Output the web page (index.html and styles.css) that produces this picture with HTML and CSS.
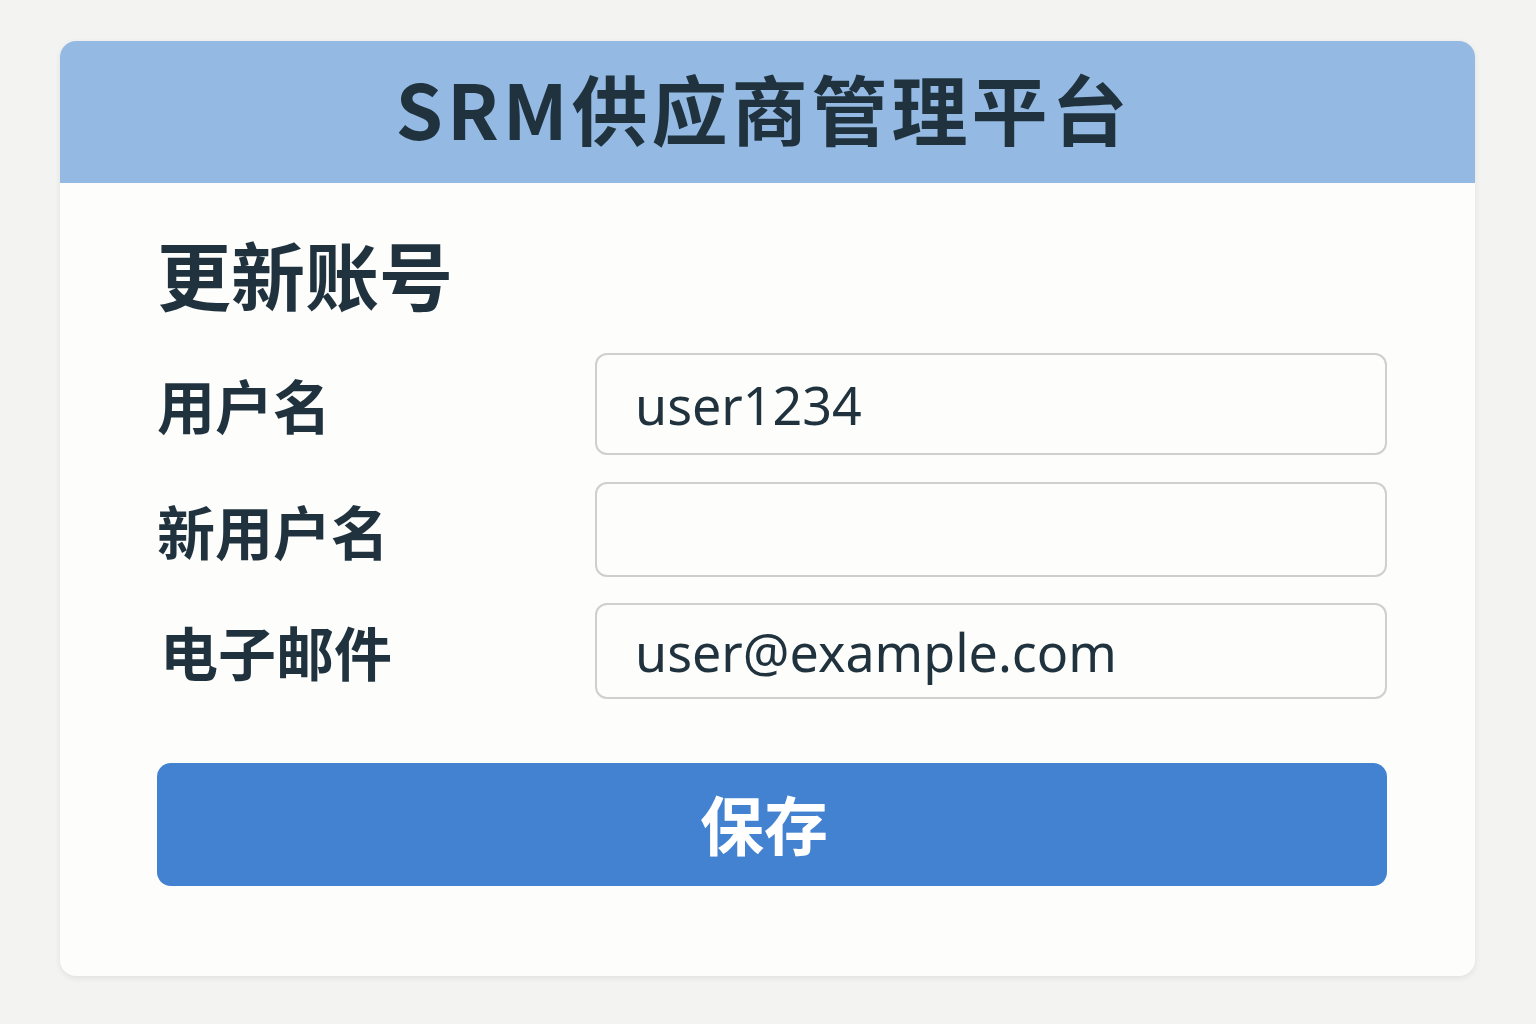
FILE: index.html
```html
<!DOCTYPE html>
<html lang="zh-CN">
<head>
    <meta charset="UTF-8">
    <meta name="viewport" content="width=device-width, initial-scale=1.0">
    <title>SRM供应商管理平台 - 更新账号</title>
    <link rel="stylesheet" href="styles.css">
</head>
<body>
    <div class="card">
        <div class="card-header">
            <h1>SRM供应商管理平台</h1>
        </div>

        <form class="card-body" onsubmit="return false;">
            <h2>更新账号</h2>

            <div class="form-row">
                <label for="username">用户名</label>
                <input type="text" id="username" value="user1234">
            </div>

            <div class="form-row row-new">
                <label for="new-username">新用户名</label>
                <input type="text" id="new-username" value="">
            </div>

            <div class="form-row row-email">
                <label for="email">电子邮件</label>
                <input type="email" id="email" value="user@example.com">
            </div>

            <button type="submit" class="save-btn">保存</button>
        </form>
    </div>
</body>
</html>
```

FILE: styles.css
```css
body {
    margin: 0;
    padding: 41px 61px 48px 60px;
    background-color: #f3f3f2;
    font-family: "Noto Sans CJK SC", "Noto Sans", sans-serif;
    color: #1f323d;
}

.card {
    background-color: #fdfdfc;
    border-radius: 16px;
    overflow: hidden;
    box-shadow: 0 2px 6px rgba(0,0,0,0.08);
}

.card-header {
    height: 142px;
    background-color: #94bae4;
    display: flex;
    align-items: center;
    justify-content: center;
}

.card-header h1 {
    margin: 0 0 10px 0;
    font-size: 76px;
    font-weight: 700;
    letter-spacing: 4px;
    line-height: 1;
    padding-right: 8px;
}

.card-body {
    padding: 50px 88px 90px 97px;
}

.card-body h2 {
    margin: 0 0 40px 0;
    font-size: 74px;
    font-weight: 700;
    line-height: 80px;
}

.form-row {
    display: grid;
    grid-template-columns: 438px minmax(0, 1fr);
    align-items: center;
    margin-bottom: 27px;
}

.form-row.row-new {
    margin-bottom: 26px;
}

.form-row.row-email {
    margin-bottom: 64px;
}

.form-row label {
    font-size: 58px;
    font-weight: 700;
    line-height: 1;
}

.form-row input {
    box-sizing: border-box;
    width: 100%;
    height: 102px;
    padding: 0 38px;
    border: 2px solid #cfcfcf;
    border-radius: 12px;
    background-color: #fdfdfc;
    font-family: "Noto Sans", sans-serif;
    font-size: 52px;
    color: #1f323d;
    outline: none;
}

.row-new input {
    height: 95px;
}

.row-email input {
    height: 96px;
}

.row-email label {
    padding-left: 3px;
}

.save-btn {
    display: block;
    width: 100%;
    height: 123px;
    padding: 0 16px 6px 0;
    background-color: #4282d0;
    color: #fff;
    border: none;
    border-radius: 14px;
    font-family: "Noto Sans CJK SC", sans-serif;
    font-size: 64px;
    font-weight: 700;
    cursor: pointer;
}
```
